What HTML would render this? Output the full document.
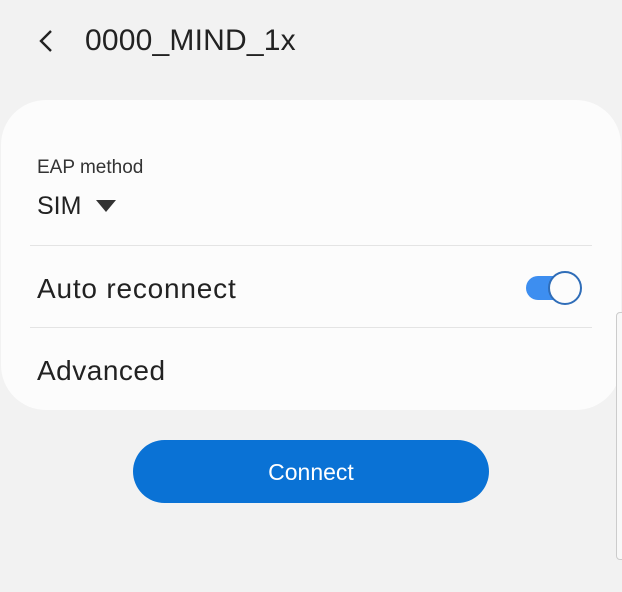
<!DOCTYPE html>
<html><head><style>
body{margin:0;width:622px;height:592px;background:#f2f2f2;font-family:"Liberation Sans",sans-serif;position:relative;overflow:hidden;color:#222}
.abs{position:absolute}
</style></head><body>
<svg class="abs" style="left:36px;top:28px" width="20" height="28"><path d="M15 3 L5 13 L15 23" stroke="#222" stroke-width="2.4" fill="none"/></svg>
<div class="abs" style="left:85px;top:24px;font-size:30px;color:#222;letter-spacing:0.2px">0000_MIND_1x</div>
<div class="abs" style="left:1px;top:100px;width:620px;height:310px;background:#fcfcfc;border-radius:45px"></div>
<div class="abs" style="left:37px;top:157px;font-size:19px;color:#333">EAP method</div>
<div class="abs" style="left:37px;top:192px;font-size:25px;color:#222">SIM</div>
<svg class="abs" style="left:95px;top:199px" width="22" height="14"><path d="M1 1 L21 1 L11 13 Z" fill="#333"/></svg>
<div class="abs" style="left:30px;top:245px;width:562px;height:1px;background:#e4e4e4"></div>
<div class="abs" style="left:37px;top:273px;font-size:28px;color:#222;letter-spacing:0.8px">Auto reconnect</div>
<div class="abs" style="left:526px;top:276px;width:40px;height:24px;background:#3d8ef0;border-radius:12px"></div>
<div class="abs" style="left:548px;top:271px;width:30px;height:30px;background:#fcfcfc;border:2px solid #2f6db8;border-radius:50%"></div>
<div class="abs" style="left:30px;top:327px;width:562px;height:1px;background:#e4e4e4"></div>
<div class="abs" style="left:37px;top:355px;font-size:28px;color:#222;letter-spacing:0.5px">Advanced</div>
<div class="abs" style="left:133px;top:440px;width:356px;height:63px;background:#0a72d5;border-radius:32px;color:#fff;font-size:23px;text-align:center;line-height:65px">Connect</div>
<div class="abs" style="left:616px;top:312px;width:8px;height:246px;border:1px solid #ccc;border-radius:4px;background:#f8f8f8"></div>
</body></html>
